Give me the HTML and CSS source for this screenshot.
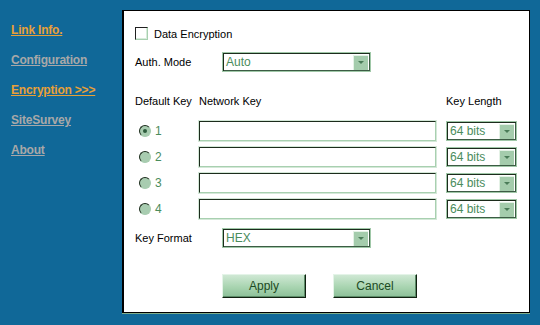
FILE: index.html
```html
<!DOCTYPE html>
<html lang="en">
<head>
    <meta charset="utf-8">
    <title>Encryption</title>
    <link rel="stylesheet" href="styles.css">
</head>
<body>
    <div class="page">
        <nav class="menu">
            <a href="#" class="menu-link active">Link Info.</a>
            <a href="#" class="menu-link">Configuration</a>
            <a href="#" class="menu-link active">Encryption &gt;&gt;&gt;</a>
            <a href="#" class="menu-link">SiteSurvey</a>
            <a href="#" class="menu-link">About</a>
        </nav>

        <div class="panel">
            <label class="check-row">
                <span class="checkbox"></span>
                Data Encryption
            </label>

            <div class="field-row auth-row">
                <span class="field-label">Auth. Mode</span>
                <div class="combo wide"><span class="combo-text">Auto</span><span class="combo-btn"></span></div>
            </div>

            <div class="keys">
                <span class="head">Default Key</span>
                <span class="head">Network Key</span>
                <span class="head len">Key Length</span>

                <label class="radio-cell"><span class="radio checked"></span>1</label>
                <span class="textbox"></span>
                <div class="len"><div class="combo small"><span class="combo-text">64 bits</span><span class="combo-btn"></span></div></div>

                <label class="radio-cell"><span class="radio"></span>2</label>
                <span class="textbox"></span>
                <div class="len"><div class="combo small"><span class="combo-text">64 bits</span><span class="combo-btn"></span></div></div>

                <label class="radio-cell"><span class="radio"></span>3</label>
                <span class="textbox"></span>
                <div class="len"><div class="combo small"><span class="combo-text">64 bits</span><span class="combo-btn"></span></div></div>

                <label class="radio-cell"><span class="radio"></span>4</label>
                <span class="textbox"></span>
                <div class="len"><div class="combo small"><span class="combo-text">64 bits</span><span class="combo-btn"></span></div></div>
            </div>

            <div class="field-row format-row">
                <span class="field-label">Key Format</span>
                <div class="combo wide"><span class="combo-text">HEX</span><span class="combo-btn"></span></div>
            </div>

            <div class="buttons">
                <button class="btn">Apply</button>
                <button class="btn">Cancel</button>
            </div>
        </div>
    </div>
</body>
</html>
```

FILE: styles.css
```css
* {
    margin: 0;
    padding: 0;
    box-sizing: border-box;
}

body {
    background: #106898;
    font-family: "Liberation Sans", Arial, sans-serif;
    font-size: 11px;
    color: #000;
    width: 540px;
    height: 325px;
    overflow: hidden;
}

.page {
    display: flex;
}

/* left menu */
.menu {
    width: 122px;
    padding: 23px 0 0 11px;
    display: flex;
    flex-direction: column;
    align-items: flex-start;
    gap: 15px;
}

.menu-link {
    font-size: 12px;
    font-weight: bold;
    line-height: 15px;
    color: #a8a8a8;
    text-decoration: underline;
    letter-spacing: -0.2px;
}

.menu-link.active {
    color: #e8a038;
}

/* main panel */
.panel {
    margin-top: 10px;
    width: 408px;
    height: 303px;
    background: #fff;
    border: 1px solid #000;
    border-left-width: 2px;
    box-shadow: 0 1px 0 #7fae8c;
    padding: 16px 0 0 11px;
}

.check-row {
    display: flex;
    align-items: center;
    gap: 6px;
    height: 13px;
}

.checkbox {
    width: 13px;
    height: 13px;
    border: 1px solid;
    border-color: #202020 #a8d0b0 #a8d0b0 #202020;
    box-shadow: inset -1px -1px 0 #d8ecdc;
}

.field-row {
    display: flex;
    align-items: center;
    height: 20px;
}

.auth-row {
    margin-top: 12px;
}

.field-label {
    width: 87px;
}

.combo {
    display: flex;
    align-items: center;
    height: 20px;
    background: #fff;
    border: 1px solid #a0c8a8;
    box-shadow: inset 1px 1px 0 #1c2c1c, inset -1px -1px 0 #3c5c44;
    padding: 2px;
}

.combo.wide {
    width: 149px;
}

.combo.small {
    width: 71px;
}

.combo-text {
    flex: 1;
    font-size: 12px;
    color: #4a8c5c;
    padding-left: 1px;
}

.combo-btn {
    width: 15px;
    height: 15px;
    background: #a4ccac;
    border-top: 1px solid #e4f2e6;
    border-left: 1px solid #e4f2e6;
    display: flex;
    align-items: center;
    justify-content: center;
}

.combo-btn::after {
    content: "";
    border-left: 3px solid transparent;
    border-right: 3px solid transparent;
    border-top: 3px solid #4a7c58;
}

/* key table */
.keys {
    margin-top: 23px;
    display: grid;
    grid-template-columns: 64px 237px 81px;
    grid-auto-rows: 20px;
    row-gap: 6px;
    align-items: center;
}

.head {
    align-self: start;
    line-height: 13px;
}

.len {
    padding-left: 10px;
}

.radio-cell {
    display: flex;
    align-items: center;
    gap: 4px;
    padding-left: 4px;
    font-size: 12px;
    color: #4a8c5c;
}

.radio {
    width: 12px;
    height: 12px;
    border-radius: 50%;
    background: #a8ccb0;
    border: 1px solid;
    border-color: #1c2c1c #a8ccb0 #a8ccb0 #1c2c1c;
    display: flex;
    align-items: center;
    justify-content: center;
}

.radio.checked::after {
    content: "";
    width: 4px;
    height: 4px;
    border-radius: 50%;
    background: #2c5c3c;
}

.textbox {
    height: 20px;
    border: 1px solid;
    border-color: #1c2c1c #a8d0b0 #a8d0b0 #1c2c1c;
    box-shadow: 0 0 0 1px #d4e8d8;
    background: #fff;
}

.format-row {
    margin-top: 9px;
}

.buttons {
    margin: 26px 0 0 87px;
    display: flex;
    gap: 27px;
}

.btn {
    width: 84px;
    height: 24px;
    font-family: "Liberation Sans", Arial, sans-serif;
    font-size: 12px;
    color: #1c4a24;
    background: linear-gradient(to bottom, #cfe8d4 0%, #a8d4b0 55%, #8cc098 100%);
    border: 1px solid;
    border-color: #e4f4e8 #102010 #102010 #e4f4e8;
    box-shadow: inset -1px -1px 0 #5c8c68;
}
```
